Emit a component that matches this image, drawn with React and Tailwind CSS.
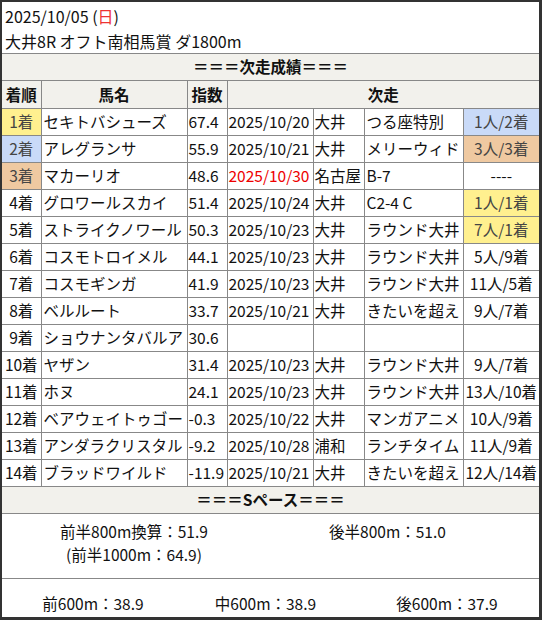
// 次走成績 table card
const F = { fontFamily: '"Noto Sans CJK JP", "Noto Sans", sans-serif' };

const rows = [
  { rank: '1着', rankBg: 'bg-[#fff08f]', name: 'セキトバシューズ', idx: '67.4', date: '2025/10/20', venue: '大井', race: 'つる座特別', res: '1人/2着', resBg: 'bg-[#c9daf8]' },
  { rank: '2着', rankBg: 'bg-[#c9daf8]', name: 'アレグランサ', idx: '55.9', date: '2025/10/21', venue: '大井', race: 'メリーウィド', res: '3人/3着', resBg: 'bg-[#efc9a1]' },
  { rank: '3着', rankBg: 'bg-[#efc9a1]', name: 'マカーリオ', idx: '48.6', date: '2025/10/30', red: true, venue: '名古屋', race: 'B-7', res: '----' },
  { rank: '4着', name: 'グロワールスカイ', idx: '51.4', date: '2025/10/24', venue: '大井', race: 'C2-4 C', res: '1人/1着', resBg: 'bg-[#fff08f]' },
  { rank: '5着', name: 'ストライクノワール', idx: '50.3', date: '2025/10/23', venue: '大井', race: 'ラウンド大井', res: '7人/1着', resBg: 'bg-[#fff08f]' },
  { rank: '6着', name: 'コスモトロイメル', idx: '44.1', date: '2025/10/23', venue: '大井', race: 'ラウンド大井', res: '5人/9着' },
  { rank: '7着', name: 'コスモギンガ', idx: '41.9', date: '2025/10/23', venue: '大井', race: 'ラウンド大井', res: '11人/5着' },
  { rank: '8着', name: 'ベルルート', idx: '33.7', date: '2025/10/21', venue: '大井', race: 'きたいを超え', res: '9人/7着' },
  { rank: '9着', name: 'ショウナンタバルア', idx: '30.6', date: '', venue: '', race: '', res: '' },
  { rank: '10着', name: 'ヤザン', idx: '31.4', date: '2025/10/23', venue: '大井', race: 'ラウンド大井', res: '9人/7着' },
  { rank: '11着', name: 'ホヌ', idx: '24.1', date: '2025/10/23', venue: '大井', race: 'ラウンド大井', res: '13人/10着' },
  { rank: '12着', name: 'ベアウェイトゥゴー', idx: '-0.3', date: '2025/10/22', venue: '大井', race: 'マンガアニメ', res: '10人/9着' },
  { rank: '13着', name: 'アンダラクリスタル', idx: '-9.2', date: '2025/10/28', venue: '浦和', race: 'ランチタイム', res: '11人/9着' },
  { rank: '14着', name: 'ブラッドワイルド', idx: '-11.9', date: '2025/10/21', venue: '大井', race: 'きたいを超え', res: '12人/14着' },
];

const cell = 'border-r border-b border-[#888] h-[27px] p-0 whitespace-nowrap overflow-hidden';

export default function App() {
  return (
    <div className="w-[542px] h-[620px] bg-white text-[15.5px] text-[#111] border-t-2 border-l-2 border-r-[3px] border-b-[3px] border-[#333] flex flex-col" style={F}>
      {/* race header */}
      <div className="px-[3px] pt-[2px] h-[52px] leading-[25px] text-[16px] border-b border-[#888]">
        <div>2025/10/05 (<span className="text-[#e33]">日</span>)</div>
        <div>大井8R オフト南相馬賞 ダ1800m</div>
      </div>

      <div className="h-[27px] bg-[#f2f1ec] border-b border-[#888] flex items-center justify-center font-bold">
        ＝＝＝次走成績＝＝＝
      </div>

      <table className="table-fixed border-collapse w-[537px]">
        <colgroup>
          <col className="w-[39px]" />
          <col className="w-[146px]" />
          <col className="w-[40px]" />
          <col className="w-[86px]" />
          <col className="w-[51px]" />
          <col className="w-[99px]" />
          <col className="w-[76px]" />
        </colgroup>
        <thead>
          <tr className="bg-[#f2f1ec] font-bold">
            <th className={`${cell} text-center`}>着順</th>
            <th className={`${cell} text-center`}>馬名</th>
            <th className={`${cell} text-center`}>指数</th>
            <th colSpan={4} className="border-b border-[#888] h-[27px] p-0 text-center">次走</th>
          </tr>
        </thead>
        <tbody>
          {rows.map((r, i) => (
            <tr key={i}>
              <td className={`${cell} text-center ${r.rankBg ? `${r.rankBg} text-[#444]` : ''}`}>{r.rank}</td>
              <td className={`${cell} pl-[2px]`}>{r.name}</td>
              <td className={`${cell} pl-[1px]`}>{r.idx}</td>
              <td className={`${cell} pl-[1px] ${r.red ? 'text-[#e00]' : ''}`}>{r.date}</td>
              <td className={`${cell} pl-[1px]`}>{r.venue}</td>
              <td className={`${cell} pl-[2px]`}>{r.race}</td>
              <td className={`border-b border-[#888] h-[27px] p-0 whitespace-nowrap text-center ${r.resBg ? `${r.resBg} text-[#444]` : ''}`}>{r.res}</td>
            </tr>
          ))}
        </tbody>
      </table>

      <div className="h-[27px] bg-[#f2f1ec] border-b border-[#888] flex items-center justify-center font-bold">
        ＝＝＝Sペース＝＝＝
      </div>

      {/* pace */}
      <div className="flex h-[65px] border-b border-[#888] pt-[6px] leading-[23px]">
        <div className="w-[264px] text-center">
          <div>前半800m換算：51.9</div>
          <div>(前半1000m：64.9)</div>
        </div>
        <div className="flex-1 text-center pr-[30px]">後半800m：51.0</div>
      </div>
      <div className="flex flex-1 pt-[13px] leading-[22px]">
        <div className="w-[182px] text-center">前600m：38.9</div>
        <div className="w-[163px] text-center">中600m：38.9</div>
        <div className="flex-1 text-center pl-[8px]">後600m：37.9</div>
      </div>
    </div>
  );
}
